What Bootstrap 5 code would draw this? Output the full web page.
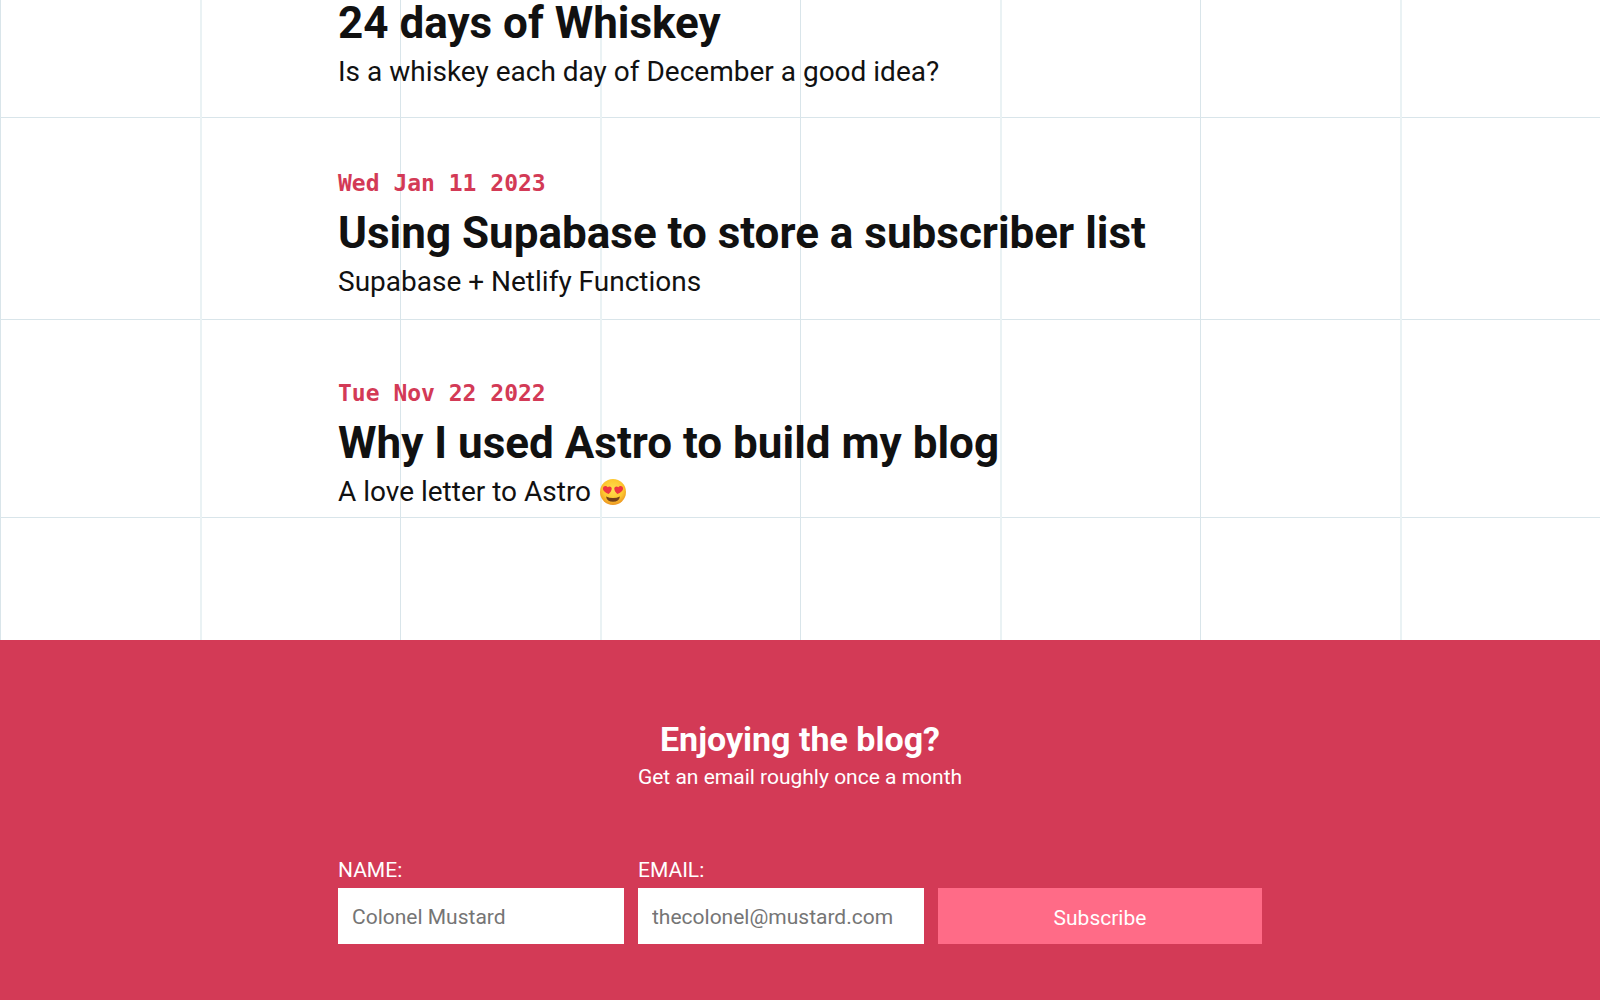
<!DOCTYPE html>
<html lang="en">
<head>
<meta charset="utf-8">
<meta name="viewport" content="width=device-width, initial-scale=1">
<title>Blog</title>
<link href="https://cdn.jsdelivr.net/npm/bootstrap@5.3.0/dist/css/bootstrap.min.css" rel="stylesheet">
<style>
  :root {
    --ink: #111;
    --brand: #d33a56;
    --brand-light: #ff6b87;
    --rule: #d9e5ea;
    --rule-soft: #eaf2f4;
  }
  body { font-family: Roboto, "Noto Sans", sans-serif; color: var(--ink); }
  .wrap { max-width: 952px; padding: 0 14px; }

  /* squared paper behind the post list */
  .paper {
    background-color: #fff;
    background-image:
      linear-gradient(to right, var(--rule) 1px, transparent 1px 200px, var(--rule-soft) 200px 202px, transparent 202px),
      linear-gradient(to bottom, transparent 117px, var(--rule) 117px 118px, transparent 118px 319px, var(--rule) 319px 320px, transparent 320px);
    background-size: 400px 400px;
    padding-bottom: 127px;
  }
  .post + .post { margin-top: 73px; }
  .post-date {
    font: 700 23px/34px "DejaVu Sans Mono", monospace;
    color: var(--brand);
    margin-bottom: 10px;
  }
  .post-title { font-size: 44px; line-height: 46px; font-weight: 700; margin-bottom: 5px; }
  .post-text { font-size: 28px; line-height: 42px; }
  .emoji { width: 26px; height: 26px; margin-left: 2px; vertical-align: -4px; }

  .signup { background: var(--brand); padding: 80px 0 56px; font-size: 21px; line-height: 30px; }
  .signup-title { font-size: 34px; line-height: 38px; font-weight: 700; margin-bottom: 4px; }
  .signup-form { gap: 14px; margin-top: 63px; }
  .signup-field { flex: 286 1 0; min-width: 0; }
  .signup-send { flex: 324 1 0; }
  .signup-field label { margin-bottom: 3px; }
  .signup .form-control, .signup .btn { height: 56px; font-size: 21px; line-height: 30px; padding: 2px 14px 0; }
  .signup .form-control::placeholder { color: #757575; }
  .signup .btn { --bs-btn-color: #fff; --bs-btn-bg: var(--brand-light); --bs-btn-hover-color: #fff; --bs-btn-hover-bg: #ff7f98; padding: 4px 0 0; }
</style>
</head>
<body>
<main class="paper">
  <div class="container-fluid wrap">
    <article class="post">
      <h2 class="post-title"><a href="#" class="text-reset text-decoration-none">24 days of Whiskey</a></h2>
      <p class="post-text mb-0">Is a whiskey each day of December a good idea?</p>
    </article>
    <article class="post">
      <div class="post-date"><time datetime="2023-01-11">Wed Jan 11 2023</time></div>
      <h2 class="post-title"><a href="#" class="text-reset text-decoration-none">Using Supabase to store a subscriber list</a></h2>
      <p class="post-text mb-0">Supabase + Netlify Functions</p>
    </article>
    <article class="post">
      <div class="post-date"><time datetime="2022-11-22">Tue Nov 22 2022</time></div>
      <h2 class="post-title"><a href="#" class="text-reset text-decoration-none">Why I used Astro to build my blog</a></h2>
      <p class="post-text mb-0">A love letter to Astro
        <svg class="emoji" viewBox="0 0 26 26" role="img" aria-label="Smiling face with heart eyes">
          <defs>
            <radialGradient id="face" cx=".5" cy=".4" r=".6">
              <stop offset="0" stop-color="#ffe04f"/><stop offset=".65" stop-color="#fdc72f"/><stop offset="1" stop-color="#ec9523"/>
            </radialGradient>
          </defs>
          <circle cx="13" cy="13" r="13" fill="url(#face)"/>
          <path d="M6 17.500Q13 20.500 20 17.500Q19 22.800 13 22.800Q7 22.800 6 17.500Z" fill="#74401a"/>
          <path d="M8.700 14.900C5.500 13.700 2.600 11.600 3 8.900C3.400 6.500 6.500 6.200 7.600 8.300C9.300 6.500 12 7.600 11.700 10C11.500 11.900 10.200 13.500 8.700 14.900Z" fill="#ee3640"/>
          <path d="M17.300 14.900C20.500 13.700 23.400 11.600 23 8.900C22.600 6.500 19.500 6.200 18.400 8.300C16.700 6.500 14 7.600 14.300 10C14.500 11.900 15.800 13.500 17.300 14.900Z" fill="#ee3640"/>
        </svg>
      </p>
    </article>
  </div>
</main>
<footer class="signup text-white">
  <div class="container-fluid wrap">
    <div class="text-center">
      <h2 class="signup-title">Enjoying the blog?</h2>
      <p class="mb-0">Get an email roughly once a month</p>
    </div>
    <form class="signup-form d-flex align-items-end">
      <div class="signup-field">
        <label class="d-block" for="name">NAME:</label>
        <input class="form-control border-0 rounded-0" id="name" type="text" placeholder="Colonel Mustard">
      </div>
      <div class="signup-field">
        <label class="d-block" for="email">EMAIL:</label>
        <input class="form-control border-0 rounded-0" id="email" type="email" placeholder="thecolonel@mustard.com">
      </div>
      <button class="signup-send btn border-0 rounded-0" type="submit">Subscribe</button>
    </form>
  </div>
</footer>
<script src="https://cdn.jsdelivr.net/npm/bootstrap@5.3.0/dist/js/bootstrap.bundle.min.js"></script>
</body>
</html>
